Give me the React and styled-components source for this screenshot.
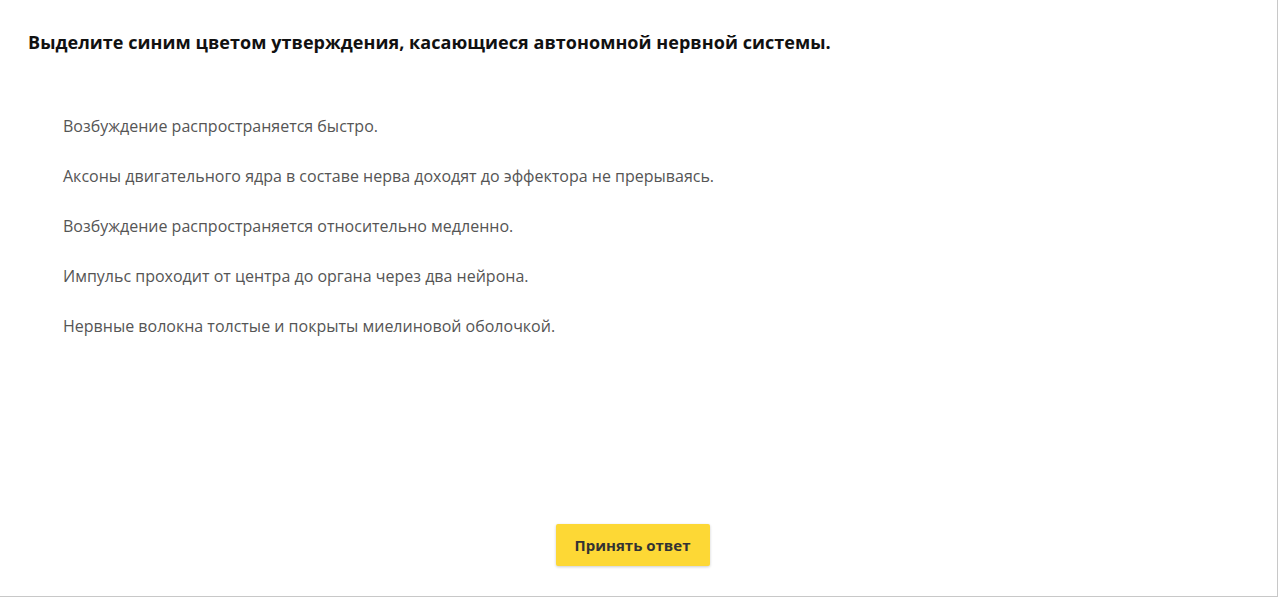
import React from "react";
import styled, { createGlobalStyle } from "styled-components";

const statements = [
  "Возбуждение распространяется быстро.",
  "Аксоны двигательного ядра в составе нерва доходят до эффектора не прерываясь.",
  "Возбуждение распространяется относительно медленно.",
  "Импульс проходит от центра до органа через два нейрона.",
  "Нервные волокна толстые и покрыты миелиновой оболочкой.",
];

const App = () => {
  return (
    <>
      <GlobalStyle />
      <Wrapper>
        <Question>
          Выделите синим цветом утверждения, касающиеся автономной нервной системы.
        </Question>
        <List>
          {statements.map((text, index) => (
            <Item key={index}>{text}</Item>
          ))}
        </List>
        <Footer>
          <SubmitButton>Принять ответ</SubmitButton>
        </Footer>
      </Wrapper>
    </>
  );
};

export default App;

const GlobalStyle = createGlobalStyle`
  body {
    margin: 0;
    background: #fff;
    font-family: "Open Sans", "Noto Sans", sans-serif;
  }
`;

const Wrapper = styled.div`
  box-sizing: border-box;
  width: 1278px;
  height: 597px;
  border-right: 1px solid #c8c8c8;
  border-bottom: 1px solid #c8c8c8;
  display: flex;
  flex-direction: column;
  padding: 29px 12px 0 28px;
`;

const Question = styled.h1`
  margin: 0;
  font-size: 18px;
  font-weight: 700;
  letter-spacing: 0.05px;
  line-height: 26px;
  color: #111;
`;

const List = styled.div`
  display: flex;
  flex-direction: column;
  gap: 28px;
  margin-top: 60px;
  padding-left: 35px;
`;

const Item = styled.div`
  font-size: 16px;
  line-height: 22px;
  color: #555;
  cursor: pointer;
`;

const Footer = styled.div`
  margin-top: auto;
  display: flex;
  justify-content: center;
  padding: 0 0 30px;
  margin-left: -28px;
`;

const SubmitButton = styled.button`
  width: 154px;
  height: 42px;
  border: none;
  border-radius: 2px;
  background: #fdd835;
  color: #333;
  font-family: "Open Sans", sans-serif;
  font-size: 15px;
  font-weight: 700;
  box-shadow: 0 1px 3px rgba(0, 0, 0, 0.2);
  cursor: pointer;
`;
